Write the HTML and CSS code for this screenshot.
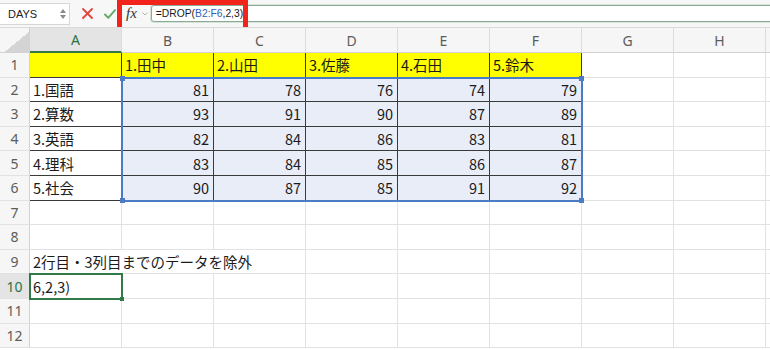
FILE: index.html
```html
<!DOCTYPE html>
<html lang="ja">
<head>
  <meta charset="UTF-8" />
  <title>DROP</title>
  <link rel="stylesheet" href="styles.css">
</head>
<body>
  <!-- formula bar -->
  <div class="toolbar">
    <div class="namebox">
      <span>DAYS</span>
      <svg class="spin" width="6" height="12" viewBox="0 0 6 12">
        <path d="M0 5 L3 1 L6 5 Z" fill="#8a8a8a"/>
        <path d="M0 7 L3 11 L6 7 Z" fill="#8a8a8a"/>
      </svg>
    </div>
    <svg class="cancel" width="11" height="11" viewBox="0 0 11 11">
      <path d="M1 1 L10 10 M10 1 L1 10" stroke="#e0463f" stroke-width="1.8" stroke-linecap="round"/>
    </svg>
    <svg class="enter" width="12" height="10" viewBox="0 0 12 10">
      <path d="M1 5.5 L4.3 8.8 L11 1.2" fill="none" stroke="#5aaa62" stroke-width="1.8" stroke-linecap="round" stroke-linejoin="round"/>
    </svg>
    <span class="fx">fx</span>
    <svg class="chev" width="6" height="4" viewBox="0 0 6 4">
      <path d="M0.5 0.5 L3 3 L5.5 0.5" fill="none" stroke="#b5b5b5" stroke-width="1"/>
    </svg>
    <div class="formula">=DROP(<span class="ref">B2:F6</span>,2,3)</div>
  </div>
  <div class="highlight"></div>

  <div class="sheet-wrap">
    <div class="sheet">
      <!-- column headers -->
      <div class="head corner"></div>
      <div class="head colhead on">A</div>
      <div class="head colhead">B</div>
      <div class="head colhead">C</div>
      <div class="head colhead">D</div>
      <div class="head colhead">E</div>
      <div class="head colhead">F</div>
      <div class="head colhead">G</div>
      <div class="head colhead">H</div>
      <div class="head colhead"></div>

      <!-- 1 -->
      <div class="head rowhead">1</div>
      <div class="cell tbl yel"></div>
      <div class="cell tbl yel">1.田中</div>
      <div class="cell tbl yel">2.山田</div>
      <div class="cell tbl yel">3.佐藤</div>
      <div class="cell tbl yel">4.石田</div>
      <div class="cell tbl yel">5.鈴木</div>
      <div class="cell"></div>
      <div class="cell"></div>
      <div class="cell"></div>

      <!-- 2 -->
      <div class="head rowhead">2</div>
      <div class="cell tbl">1.国語</div>
      <div class="cell tbl sel num">81</div>
      <div class="cell tbl sel num">78</div>
      <div class="cell tbl sel num">76</div>
      <div class="cell tbl sel num">74</div>
      <div class="cell tbl sel num">79</div>
      <div class="cell"></div>
      <div class="cell"></div>
      <div class="cell"></div>

      <!-- 3 -->
      <div class="head rowhead">3</div>
      <div class="cell tbl">2.算数</div>
      <div class="cell tbl sel num">93</div>
      <div class="cell tbl sel num">91</div>
      <div class="cell tbl sel num">90</div>
      <div class="cell tbl sel num">87</div>
      <div class="cell tbl sel num">89</div>
      <div class="cell"></div>
      <div class="cell"></div>
      <div class="cell"></div>

      <!-- 4 -->
      <div class="head rowhead">4</div>
      <div class="cell tbl">3.英語</div>
      <div class="cell tbl sel num">82</div>
      <div class="cell tbl sel num">84</div>
      <div class="cell tbl sel num">86</div>
      <div class="cell tbl sel num">83</div>
      <div class="cell tbl sel num">81</div>
      <div class="cell"></div>
      <div class="cell"></div>
      <div class="cell"></div>

      <!-- 5 -->
      <div class="head rowhead">5</div>
      <div class="cell tbl">4.理科</div>
      <div class="cell tbl sel num">83</div>
      <div class="cell tbl sel num">84</div>
      <div class="cell tbl sel num">85</div>
      <div class="cell tbl sel num">86</div>
      <div class="cell tbl sel num">87</div>
      <div class="cell"></div>
      <div class="cell"></div>
      <div class="cell"></div>

      <!-- 6 -->
      <div class="head rowhead">6</div>
      <div class="cell tbl">5.社会</div>
      <div class="cell tbl sel num">90</div>
      <div class="cell tbl sel num">87</div>
      <div class="cell tbl sel num">85</div>
      <div class="cell tbl sel num">91</div>
      <div class="cell tbl sel num">92</div>
      <div class="cell"></div>
      <div class="cell"></div>
      <div class="cell"></div>

      <!-- 7 -->
      <div class="head rowhead">7</div>
      <div class="cell"></div><div class="cell"></div><div class="cell"></div>
      <div class="cell"></div><div class="cell"></div><div class="cell"></div>
      <div class="cell"></div><div class="cell"></div><div class="cell"></div>

      <!-- 8 -->
      <div class="head rowhead">8</div>
      <div class="cell"></div><div class="cell"></div><div class="cell"></div>
      <div class="cell"></div><div class="cell"></div><div class="cell"></div>
      <div class="cell"></div><div class="cell"></div><div class="cell"></div>

      <!-- 9 -->
      <div class="head rowhead">9</div>
      <div class="cell span3">2行目・3列目までのデータを除外</div>
      <div class="cell"></div><div class="cell"></div><div class="cell"></div>
      <div class="cell"></div><div class="cell"></div><div class="cell"></div>

      <!-- 10 -->
      <div class="head rowhead on">10</div>
      <div class="cell">6,2,3)</div>
      <div class="cell"></div><div class="cell"></div><div class="cell"></div>
      <div class="cell"></div><div class="cell"></div><div class="cell"></div>
      <div class="cell"></div><div class="cell"></div>

      <!-- 11 -->
      <div class="head rowhead">11</div>
      <div class="cell"></div><div class="cell"></div><div class="cell"></div>
      <div class="cell"></div><div class="cell"></div><div class="cell"></div>
      <div class="cell"></div><div class="cell"></div><div class="cell"></div>

      <!-- 12 -->
      <div class="head rowhead">12</div>
      <div class="cell"></div><div class="cell"></div><div class="cell"></div>
      <div class="cell"></div><div class="cell"></div><div class="cell"></div>
      <div class="cell"></div><div class="cell"></div><div class="cell"></div>
    </div>

    <!-- selection layer -->
    <div class="overlay">
      <div class="range">
        <i class="handle tl"></i><i class="handle tr"></i>
        <i class="handle bl"></i><i class="handle br"></i>
      </div>
      <div class="active"><i class="dot"></i></div>
    </div>
  </div>
</body>
</html>
```

FILE: styles.css
```css
body {
  margin: 0;
  padding: 0;
  background: #fff;
  overflow: hidden;
  font-family: 'Noto Sans CJK JP', sans-serif;
  position: relative;
}

.toolbar {
  height: 27px;
  display: flex;
  align-items: center;
  background: #f7f7f7;
  box-sizing: border-box;
  overflow: hidden;
}

.namebox {
  width: 70px;
  height: 22px;
  box-sizing: border-box;
  background: #fff;
  border: 1px solid #d6d6d6;
  border-left: none;
  display: flex;
  align-items: center;
  justify-content: space-between;
  padding: 0 3px 0 8px;
  font: 11px 'Liberation Sans', Arial, sans-serif;
  color: #222;
}

.cancel {
  margin-left: 12px;
}

.enter {
  margin-left: 11px;
}

.fx {
  margin-left: 10px;
  font: italic 15px 'Liberation Serif', 'Times New Roman', serif;
  color: #333;
  line-height: 1;
}

.chev {
  margin-left: 5px;
}

.formula {
  margin-left: 3px;
  margin-right: -10px;
  flex: 1;
  height: 17px;
  box-sizing: border-box;
  border: 1px solid #8cab96;
  border-radius: 3px;
  box-shadow: 0 0 0 1px #d5e3d9;
  background: #fff;
  padding: 0 4px;
  font: 10.3px 'Liberation Sans', Arial, sans-serif;
  line-height: 15px;
  color: #1a1a1a;
}

.ref {
  color: #2f5fb3;
}

/* red call-out box around fx + formula */
.highlight {
  position: absolute;
  left: 117px;
  top: 0;
  width: 131px;
  height: 32px;
  box-sizing: border-box;
  border: 5px solid #f2231a;
}

.sheet-wrap {
  position: relative;
}

.sheet,
.overlay {
  display: grid;
  grid-template-columns: 30px repeat(8, 92px) 1fr;
  grid-template-rows: 26px repeat(12, 24.6px) 1fr;
}

.sheet {
  height: 323px;
}

.overlay {
  position: absolute;
  inset: 0;
  pointer-events: none;
}

.head {
  box-sizing: border-box;
  background: #f6f6f6;
  color: #5c5c5c;
  font: 14px 'Noto Sans', 'Liberation Sans', sans-serif;
  display: flex;
  align-items: center;
  justify-content: center;
}

.colhead {
  border-top: 1px solid #dadada;
  border-right: 1px solid #dcdcdc;
  border-bottom: 1px solid #d2d2d2;
}

.corner {
  border-top: 1px solid #dadada;
  border-right: 1px solid #d2d2d2;
  border-bottom: 1px solid #d2d2d2;
  background: linear-gradient(to top left, #d4d4d4 0 42%, #f6f6f6 42%);
}

.rowhead {
  border-right: 1px solid #d2d2d2;
  border-bottom: 1px solid #e2e2e2;
}

.colhead.on {
  background: #e4e4e4;
  color: #2a7346;
  border-bottom: 2px solid #2f7a48;
}

.rowhead.on {
  background: #e4e4e4;
  color: #2a7346;
}

.cell {
  box-sizing: border-box;
  border-right: 1px solid #e2e2e2;
  border-bottom: 1px solid #e2e2e2;
  padding: 0 3px;
  display: flex;
  align-items: center;
  white-space: nowrap;
  font-size: 14.5px;
  color: #1b1b1b;
  overflow: hidden;
}

.num {
  justify-content: flex-end;
  padding-right: 4px;
}

.tbl {
  border-right-color: #3a3a3a;
  border-bottom-color: #3a3a3a;
}

.yel {
  background: #ffff00;
}

.sel {
  background: #e9edf8;
}

.span3 {
  grid-column: span 3;
}

.range {
  grid-column: 3 / 8;
  grid-row: 3 / 8;
  margin: -1px;
  border: 2px solid #4a7bc4;
  position: relative;
}

.handle {
  position: absolute;
  width: 5px;
  height: 5px;
  background: #4a7bc4;
}

.tl { left: -3px; top: -3px; }
.tr { right: -3px; top: -3px; }
.bl { left: -3px; bottom: -3px; }
.br { right: -3px; bottom: -3px; }

.active {
  grid-column: 2 / 3;
  grid-row: 11 / 12;
  margin: -1px;
  border: 2px solid #2f7a48;
  position: relative;
}

.dot {
  position: absolute;
  right: -3px;
  bottom: -3px;
  width: 4px;
  height: 4px;
  background: #2f7a48;
}
```
